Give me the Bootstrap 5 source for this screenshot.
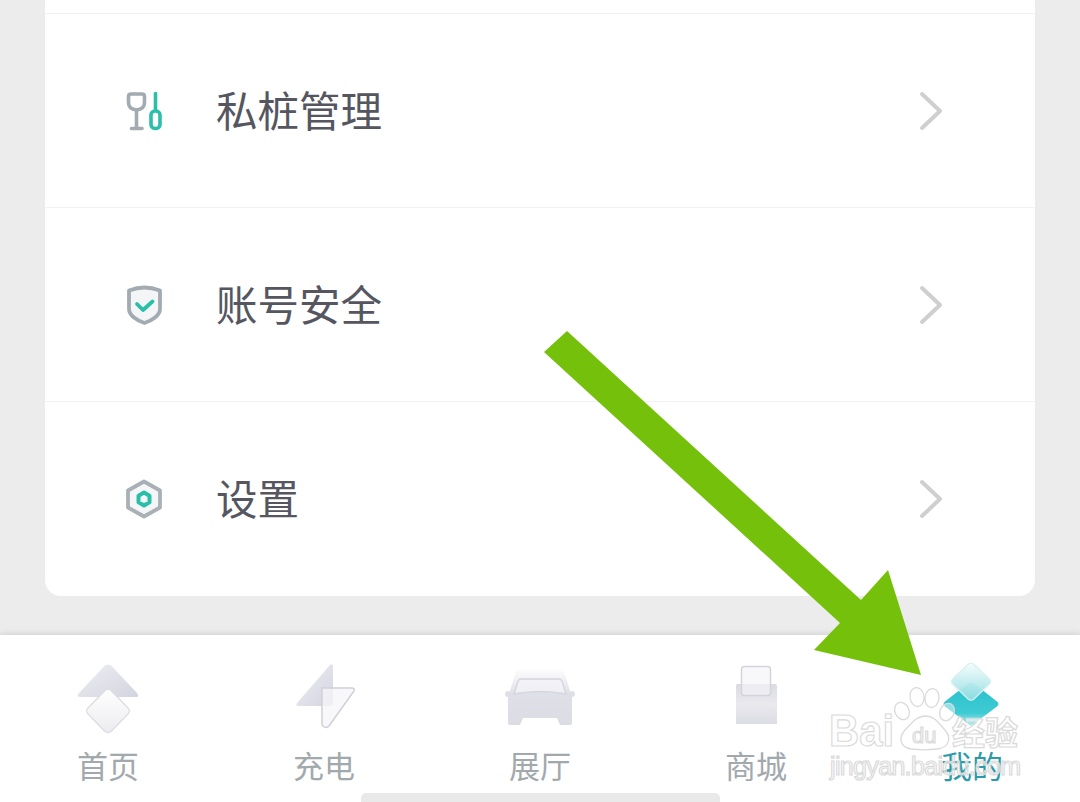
<!DOCTYPE html>
<html lang="zh-CN">
<head>
<meta charset="utf-8">
<title>我的</title>
<link href="https://cdn.jsdelivr.net/npm/bootstrap@5.3.0/dist/css/bootstrap.min.css" rel="stylesheet">
<style>
html,body{height:802px;overflow:hidden}
body{background:#ececec;font-family:"Noto Sans CJK SC","Liberation Sans",sans-serif;position:relative;width:1080px}
.pg-main{height:635px;padding:0 45px 39px}
.pg-sheet{background:#fff;border-radius:0 0 16px 16px;width:990px}
.pg-row{padding-left:81px;padding-right:92px;border-bottom:1px solid #f2f2f3}
.pg-row:last-child{border-bottom:0;height:194px}
.pg-top{height:14px;border-bottom:1px solid #f2f2f3}
.pg-mid{height:194px}
.pg-last{height:194px}
.pg-ico{width:38px;height:40px;margin-right:52px;flex:none}
.pg-label{font-size:41.5px;line-height:50px;color:#55565f;font-weight:400;margin-bottom:4px}
.pg-chev{width:24px;height:40px;flex:none}
.pg-bar{height:167px;background:#fff;box-shadow:0 -1px 6px rgba(0,0,0,.13);padding-top:25px;position:relative}
.pg-tab{width:216px}
.pg-tab svg{width:100px;height:75px;display:block}
.pg-tablabel{font-size:31px;line-height:32px;margin-top:14px;color:#a2a9ad}
.pg-on{color:#2b9aa9}
.pg-handle{position:absolute;left:361px;bottom:0;width:359px;height:9px;background:#e9e9e9;border-radius:5px 5px 0 0}
.pg-over{position:absolute;left:0;top:0;width:1080px;height:802px;pointer-events:none}
.pg-wm{font-family:"Liberation Sans",sans-serif;fill:rgba(255,255,255,.6);stroke:#dadada;stroke-width:1.200}
.pg-wmc{font-family:"Noto Sans CJK SC",sans-serif;font-weight:700;fill:rgba(255,255,255,.6);stroke:#dadada;stroke-width:1.200}
</style>
</head>
<body>
<main class="pg-main d-flex flex-column justify-content-end">
  <section class="pg-sheet">
    <div class="pg-top"></div>
    <div class="pg-row pg-mid d-flex align-items-center">
      <svg class="pg-ico" viewBox="0 0 38 40" fill="none" stroke-linecap="round" stroke-linejoin="round">
        <path d="M5 3h11q2.500 0 2.500 2.500v6q0 6.500-8 7.500-8-1-8-7.500v-6Q2.500 3 5 3z" stroke="#a3abb2" stroke-width="3.600"/>
        <path d="M10.500 19v18M5.500 37.500h10.500" stroke="#a3abb2" stroke-width="3.600"/>
        <path d="M29.500 2.500v17" stroke="#2bbfa9" stroke-width="3.600"/>
        <rect x="25" y="20" width="9" height="17.500" rx="4" stroke="#2bbfa9" stroke-width="3.600"/>
      </svg>
      <span class="pg-label flex-grow-1">私桩管理</span>
      <svg class="pg-chev" viewBox="0 0 24 40" fill="none"><path d="M3 3l18 17L3 37" stroke="#cfcfcf" stroke-width="4" stroke-linecap="round" stroke-linejoin="round"/></svg>
    </div>
    <div class="pg-row pg-mid d-flex align-items-center">
      <svg class="pg-ico" viewBox="0 0 38 40" fill="none" stroke-linecap="round" stroke-linejoin="round">
        <path d="M18.500 2.500Q26 2.500 34 5.500v18.500c0 6.500-8 11.500-15.500 14C11 35.500 3 30.500 3 24V5.500Q11 2.500 18.500 2.500z" fill="#f3f5f6" stroke="#a3abb2" stroke-width="3.800"/>
        <path d="M11 19l6 6 9.500-8.500" stroke="#2bbfa9" stroke-width="3.800"/>
      </svg>
      <span class="pg-label flex-grow-1">账号安全</span>
      <svg class="pg-chev" viewBox="0 0 24 40" fill="none"><path d="M3 3l18 17L3 37" stroke="#cfcfcf" stroke-width="4" stroke-linecap="round" stroke-linejoin="round"/></svg>
    </div>
    <div class="pg-row pg-last d-flex align-items-center">
      <svg class="pg-ico" viewBox="0 0 38 40" fill="none" stroke-linejoin="round">
        <path d="M18 2.500L34 11.500v17L18 37.500 2 28.500v-17z" fill="#f4f6f7" stroke="#a9b0b6" stroke-width="3.800"/>
        <path d="M18 13.500l5.500 3.200v6.600L18 26.500l-5.500-3.200v-6.600z" stroke="#2bbfa9" stroke-width="4"/>
      </svg>
      <span class="pg-label flex-grow-1">设置</span>
      <svg class="pg-chev" viewBox="0 0 24 40" fill="none"><path d="M3 3l18 17L3 37" stroke="#cfcfcf" stroke-width="4" stroke-linecap="round" stroke-linejoin="round"/></svg>
    </div>
  </section>
</main>

<nav class="pg-bar d-flex">
  <svg width="0" height="0" class="position-absolute">
    <defs>
      <linearGradient id="g1" x1="0" y1="0" x2="1" y2="1"><stop offset="0" stop-color="#eeeef3"/><stop offset="1" stop-color="#d3d4e0"/></linearGradient>
      <linearGradient id="g2" x1="0" y1="0" x2="0" y2="1"><stop offset="0" stop-color="#ffffff"/><stop offset="1" stop-color="#ececf0"/></linearGradient>
      <linearGradient id="g3" x1="0" y1="0" x2="0" y2="1"><stop offset="0" stop-color="#ffffff"/><stop offset=".45" stop-color="#dfdfe7"/><stop offset="1" stop-color="#dcdce5"/></linearGradient>
      <linearGradient id="g6" x1="0" y1="0" x2="0" y2="1"><stop offset="0" stop-color="#dbdbe3"/><stop offset=".5" stop-color="#e9e9ee"/><stop offset="1" stop-color="#dcdce4"/></linearGradient>
      <linearGradient id="g4" x1="0" y1="0" x2="0" y2="1"><stop offset="0" stop-color="#27bfcc"/><stop offset=".7" stop-color="#3fcbd3"/><stop offset="1" stop-color="#b5ecee"/></linearGradient>
      <linearGradient id="g5" x1="0" y1="0" x2="0" y2="1"><stop offset="0" stop-color="#f6fcfc"/><stop offset="1" stop-color="#8fdde2"/></linearGradient>
    </defs>
  </svg>
  <div class="pg-tab d-flex flex-column align-items-center">
    <svg viewBox="0 0 100 75">
      <path d="M50 4.500Q48 4.500 46 6.500L21 33q-3 4 1 4h56q4 0 1-4L54 6.500Q52 4.500 50 4.500z" fill="url(#g1)"/>
      <path d="M47 30.500Q50 28 53 30.500L70 48q3 3 0 6L53 71.500q-3 2.500-6 0L30 54q-3-3 0-6z" fill="url(#g2)" stroke="#dcdce2" stroke-width="1.200"/>
    </svg>
    <span class="pg-tablabel">首页</span>
  </div>
  <div class="pg-tab d-flex flex-column align-items-center">
    <svg viewBox="0 0 100 75">
      <path d="M56 5q3-2 3 2v37q0 2-2 2H25q-4 0-2-3z" fill="url(#g1)"/>
      <path d="M48 28h30q3 0 2 3L55 66q-3 3-6 0-1-1-1-3z" fill="#f6f6f9" fill-opacity=".78" stroke="#cfd0d8" stroke-width="1.500"/>
    </svg>
    <span class="pg-tablabel">充电</span>
  </div>
  <div class="pg-tab d-flex flex-column align-items-center">
    <svg viewBox="0 0 100 75">
      <path d="M30 8h40q3 0 4 3l6 20h2q3 0 3 3t-3 3V63q0 2-2 2H70l-3-7H33l-3 7H20q-2 0-2-2V37q-3 0-3-3t3-3h2l6-20q1-3 4-3z" fill="url(#g3)"/>
      <path d="M31 19h38q2 0 3 2l4 13q-26-5-52 0l4-13q1-2 3-2z" fill="#f3f3f7" fill-opacity=".8" stroke="#d4d5dd" stroke-width="1.300"/>
    </svg>
    <span class="pg-tablabel">展厅</span>
  </div>
  <div class="pg-tab d-flex flex-column align-items-center">
    <svg viewBox="0 0 100 75">
      <path d="M31 24h38q2 0 2 2v38H30V26q0-2 1-2z" fill="url(#g6)"/>
      <rect x="35.500" y="6.500" width="29" height="29" rx="3" fill="#f5f5f8" fill-opacity=".65" stroke="#d4d5dc" stroke-width="1.500"/>
    </svg>
    <span class="pg-tablabel">商城</span>
  </div>
  <div class="pg-tab d-flex flex-column align-items-center">
    <svg viewBox="0 0 100 75">
      <path d="M46 23.500q3-2 6 0l23 18q3 2.500 0 5L49 66 23 46.500q-3-2.500 0-5z" fill="url(#g4)"/>
      <path d="M46 4.500q3-2.500 6 0L67 18.500q3 3 0 6L52 39q-3 2.500-6 0L31 24.500q-3-3 0-6z" fill="url(#g5)" fill-opacity=".94" stroke="#d6f1f2" stroke-width="1.200"/>
    </svg>
    <span class="pg-tablabel pg-on">我的</span>
  </div>
  <div class="pg-handle"></div>
</nav>

<svg class="pg-over" viewBox="0 0 1080 802">
  <polygon points="544,352 567,331 861,600 888,570 921,675 814,650 840,623" fill="#74c00a"/>
  <g fill="rgba(255,255,255,.45)" stroke="#dadada" stroke-width="1.300">
    <ellipse cx="902" cy="711" rx="7" ry="9" transform="rotate(-25 902 711)"/>
    <ellipse cx="917" cy="697" rx="7" ry="9.500" transform="rotate(-8 917 697)"/>
    <ellipse cx="932" cy="698" rx="7" ry="9.500" transform="rotate(8 932 698)"/>
    <ellipse cx="947" cy="712" rx="7" ry="9" transform="rotate(25 947 712)"/>
    <path d="M926 716c9 0 13 8 19 14 7 8 4 18-8 19-8 1-18 1-26 0-11-2-13-11-6-19 6-6 11-14 21-14z"/>
  </g>
  <text class="pg-wm" x="829" y="746" font-size="45" font-weight="700" textLength="65" lengthAdjust="spacingAndGlyphs">Bai</text>
  <text class="pg-wm" x="912" y="743" font-size="22">du</text>
  <text class="pg-wmc" x="952" y="745" font-size="33">经验</text>
  <text class="pg-wm" x="830" y="775" font-size="25" textLength="191" lengthAdjust="spacing">jingyan.baidu.com</text>
</svg>
</body>
</html>
